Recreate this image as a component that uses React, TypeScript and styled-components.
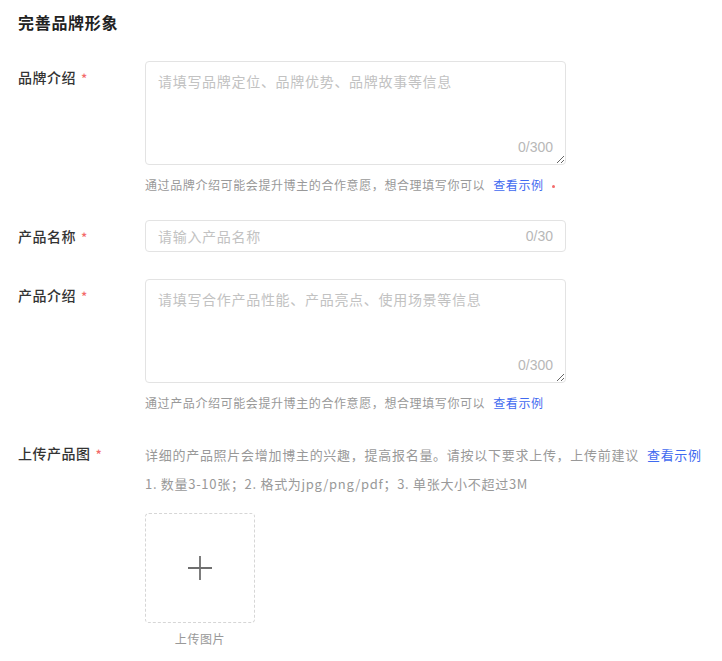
import React from 'react';
import styled, { createGlobalStyle } from 'styled-components';

const GlobalStyle = createGlobalStyle`
  html, body {
    margin: 0;
    padding: 0;
    background: #fff;
  }
  body {
    font-family: 'Noto Sans CJK SC', 'Noto Sans', sans-serif;
    color: #333;
  }
  * {
    box-sizing: border-box;
  }
`;

const Page = styled.div`
  padding: 11px 18px 0;
  width: 722px;
`;

const Title = styled.h2`
  margin: 0;
  font-size: 16px;
  font-weight: 700;
  line-height: 22px;
  letter-spacing: 0.7px;
  color: #222;
`;

const Form = styled.div`
  display: flex;
  flex-direction: column;
  margin-top: 28px;
`;

const Row = styled.div<{ $gap?: number }>`
  display: grid;
  grid-template-columns: 127px 421px;
  margin-top: ${(p) => p.$gap ?? 0}px;
`;

const Label = styled.div<{ $top?: number }>`
  padding-top: ${(p) => p.$top ?? 6}px;
  font-size: 14px;
  font-weight: 500;
  line-height: 22px;
  letter-spacing: 0.5px;
  color: #333;
  display: flex;
  align-items: flex-start;
`;

const Star = styled.span`
  color: #f36b6b;
  font-size: 13px;
  line-height: 20px;
  margin-left: 5px;
  margin-top: 3px;
`;

const Field = styled.div`
  display: flex;
  flex-direction: column;
`;

const AreaBox = styled.div`
  position: relative;
  height: 104px;
  border: 1px solid #e3e3e3;
  border-radius: 4px;
  overflow: hidden;
`;

const TextArea = styled.textarea`
  display: block;
  width: 100%;
  height: 100%;
  border: none;
  outline: none;
  padding: 9px 12px;
  font-family: inherit;
  font-size: 14px;
  line-height: 20px;
  letter-spacing: 0.7px;
  color: #333;
  resize: both;
  background: transparent;

  &::placeholder {
    color: #c2c2c2;
  }
`;

const Counter = styled.span<{ $overlay?: boolean }>`
  font-family: 'Liberation Sans', Arial, sans-serif;
  font-size: 14px;
  color: #b8b8b8;
  ${(p) =>
    p.$overlay &&
    `
    position: absolute;
    right: 12px;
    bottom: 9px;
  `}
`;

const InputBox = styled.div`
  display: flex;
  align-items: center;
  height: 32px;
  padding: 0 12px;
  border: 1px solid #e3e3e3;
  border-radius: 4px;
`;

const Input = styled.input`
  flex: 1;
  border: none;
  outline: none;
  padding: 0;
  font-family: inherit;
  font-size: 14px;
  letter-spacing: 0.7px;
  color: #333;
  background: transparent;

  &::placeholder {
    color: #c2c2c2;
  }
`;

const Help = styled.div<{ $size?: number; $spacing?: number; $lh?: number }>`
  font-size: ${(p) => p.$size ?? 12}px;
  line-height: ${(p) => p.$lh ?? 18}px;
  letter-spacing: ${(p) => p.$spacing ?? 0.6}px;
  color: #999;
  white-space: nowrap;
`;

const HelpBelow = styled(Help)`
  margin-top: 11px;
`;

const Link = styled.a`
  color: #3f6af0;
  text-decoration: none;
  margin-left: 8px;
  cursor: pointer;
`;

const Dot = styled.span`
  display: inline-block;
  width: 3px;
  height: 3px;
  border-radius: 50%;
  background: #f36b6b;
  margin-left: 8px;
  vertical-align: middle;
`;

const UploadField = styled.div`
  display: flex;
  flex-direction: column;
  padding-top: 1px;
`;

const UploadItem = styled.div`
  display: flex;
  flex-direction: column;
  align-items: center;
  width: 110px;
  margin-top: 15px;
`;

const UploadBox = styled.button`
  width: 110px;
  height: 110px;
  border: 1px dashed #d6d6d6;
  border-radius: 4px;
  background: #fff;
  display: flex;
  align-items: center;
  justify-content: center;
  padding: 0;
  cursor: pointer;
`;

const UploadText = styled.div`
  margin-top: 7px;
  font-size: 12px;
  line-height: 18px;
  letter-spacing: 0.6px;
  color: #999;
`;

const PlusIcon = () => (
  <svg width="26" height="26" viewBox="0 0 26 26">
    <path d="M13 1v24M1 13h24" stroke="#6f6f6f" strokeWidth="1.8" fill="none" />
  </svg>
);

const App: React.FC = () => {
  return (
    <Page>
      <GlobalStyle />
      <Title>完善品牌形象</Title>
      <Form>
        <Row>
          <Label $top={5}>
            品牌介绍<Star>*</Star>
          </Label>
          <Field>
            <AreaBox>
              <TextArea placeholder='请填写品牌定位、品牌优势、品牌故事等信息' />
              <Counter $overlay>0/300</Counter>
            </AreaBox>
            <HelpBelow>
              通过品牌介绍可能会提升博主的合作意愿，想合理填写你可以
              <Link>查看示例</Link>
              <Dot />
            </HelpBelow>
          </Field>
        </Row>

        <Row $gap={26}>
          <Label $top={5}>
            产品名称<Star>*</Star>
          </Label>
          <InputBox>
            <Input placeholder='请输入产品名称' />
            <Counter>0/30</Counter>
          </InputBox>
        </Row>

        <Row $gap={27}>
          <Label $top={5}>
            产品介绍<Star>*</Star>
          </Label>
          <Field>
            <AreaBox>
              <TextArea placeholder='请填写合作产品性能、产品亮点、使用场景等信息' />
              <Counter $overlay>0/300</Counter>
            </AreaBox>
            <HelpBelow>
              通过产品介绍可能会提升博主的合作意愿，想合理填写你可以
              <Link>查看示例</Link>
            </HelpBelow>
          </Field>
        </Row>

        <Row $gap={27}>
          <Label $top={3}>
            上传产品图<Star>*</Star>
          </Label>
          <UploadField>
            <Help $size={13} $spacing={0.72} $lh={29}>
              详细的产品照片会增加博主的兴趣，提高报名量。请按以下要求上传，上传前建议
              <Link>查看示例</Link>
            </Help>
            <Help $size={13} $spacing={0.7} $lh={29}>
              1. 数量3-10张；2. 格式为jpg/png/pdf；3. 单张大小不超过3M
            </Help>
            <UploadItem>
              <UploadBox>
                <PlusIcon />
              </UploadBox>
              <UploadText>上传图片</UploadText>
            </UploadItem>
          </UploadField>
        </Row>
      </Form>
    </Page>
  );
};

export default App;
